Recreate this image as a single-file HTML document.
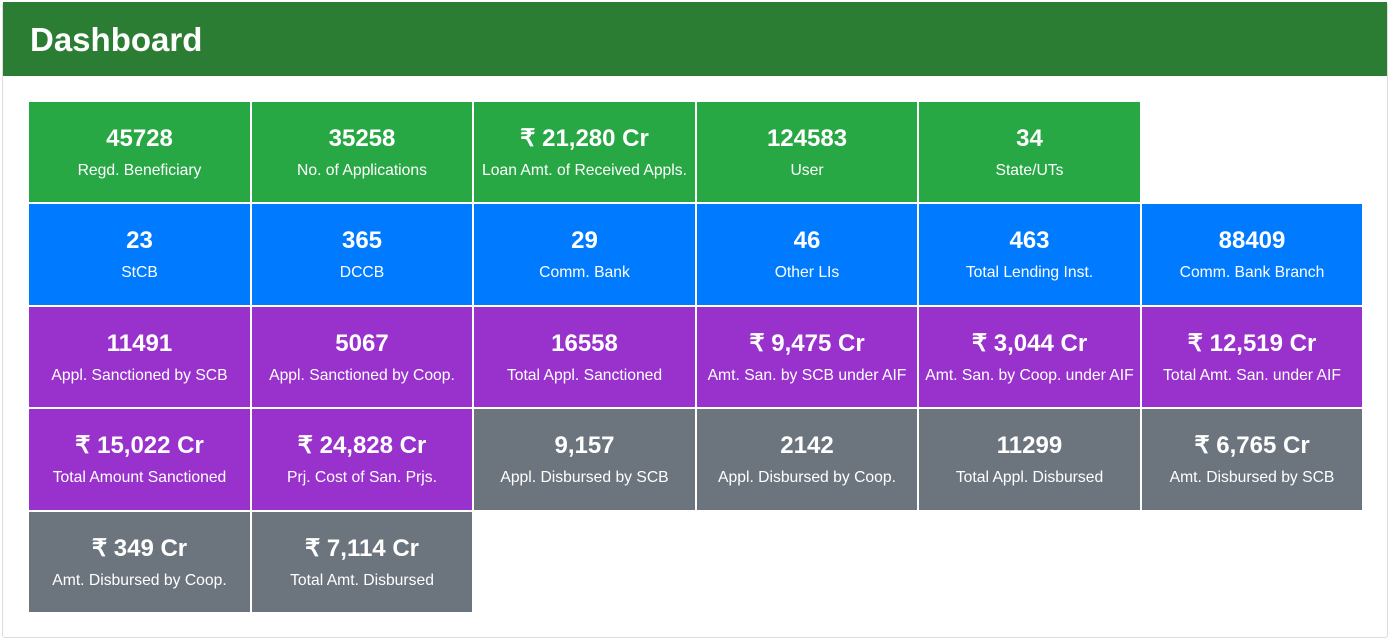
<!DOCTYPE html>
<html><head><meta charset="utf-8"><style>
*{margin:0;padding:0;box-sizing:border-box}
body{width:1390px;height:641px;background:#fff;font-family:"Liberation Sans",sans-serif;position:relative;overflow:hidden}
.card{position:absolute;left:2px;top:2px;width:1386px;height:636px;border:1px solid #ddd;border-radius:3px}
.hdr{position:absolute;left:3px;top:2px;width:1384px;height:74px;background:#2a7d32;color:#fff;font-size:33px;font-weight:bold;padding-left:27px;line-height:76px}
.t{position:absolute;color:#fff;text-align:center}
.t b{display:block;font-size:24px;margin-top:23px;line-height:28px}
.t span{display:block;font-size:15.7px;margin-top:9px;line-height:18px}
.g{background:#28a745}.bl{background:#007bff}.p{background:#9932cc}.gr{background:#6c757d}
</style></head><body>
<div class="card"></div>
<div class="hdr">Dashboard</div>
<div id="w"></div>
<script>
var xs=[29,252,474,697,919,1142],ws=[221,220,221,220,221,220],ys=[102,204,307,409,512],hs=[100,101,100,101,100];
var d=[
[["g","45728","Regd. Beneficiary"],["g","35258","No. of Applications"],["g","₹ 21,280 Cr","Loan Amt. of Received Appls."],["g","124583","User"],["g","34","State/UTs"]],
[["bl","23","StCB"],["bl","365","DCCB"],["bl","29","Comm. Bank"],["bl","46","Other LIs"],["bl","463","Total Lending Inst."],["bl","88409","Comm. Bank Branch"]],
[["p","11491","Appl. Sanctioned by SCB"],["p","5067","Appl. Sanctioned by Coop."],["p","16558","Total Appl. Sanctioned"],["p","₹ 9,475 Cr","Amt. San. by SCB under AIF"],["p","₹ 3,044 Cr","Amt. San. by Coop. under AIF"],["p","₹ 12,519 Cr","Total Amt. San. under AIF"]],
[["p","₹ 15,022 Cr","Total Amount Sanctioned"],["p","₹ 24,828 Cr","Prj. Cost of San. Prjs."],["gr","9,157","Appl. Disbursed by SCB"],["gr","2142","Appl. Disbursed by Coop."],["gr","11299","Total Appl. Disbursed"],["gr","₹ 6,765 Cr","Amt. Disbursed by SCB"]],
[["gr","₹ 349 Cr","Amt. Disbursed by Coop."],["gr","₹ 7,114 Cr","Total Amt. Disbursed"]]];
var h="";d.forEach(function(r,i){r.forEach(function(c,j){h+='<div class="t '+c[0]+'" style="left:'+xs[j]+'px;top:'+ys[i]+'px;width:'+ws[j]+'px;height:'+hs[i]+'px"><b>'+c[1]+'</b><span>'+c[2]+'</span></div>';});});
document.getElementById("w").innerHTML=h;
</script>
</body></html>
